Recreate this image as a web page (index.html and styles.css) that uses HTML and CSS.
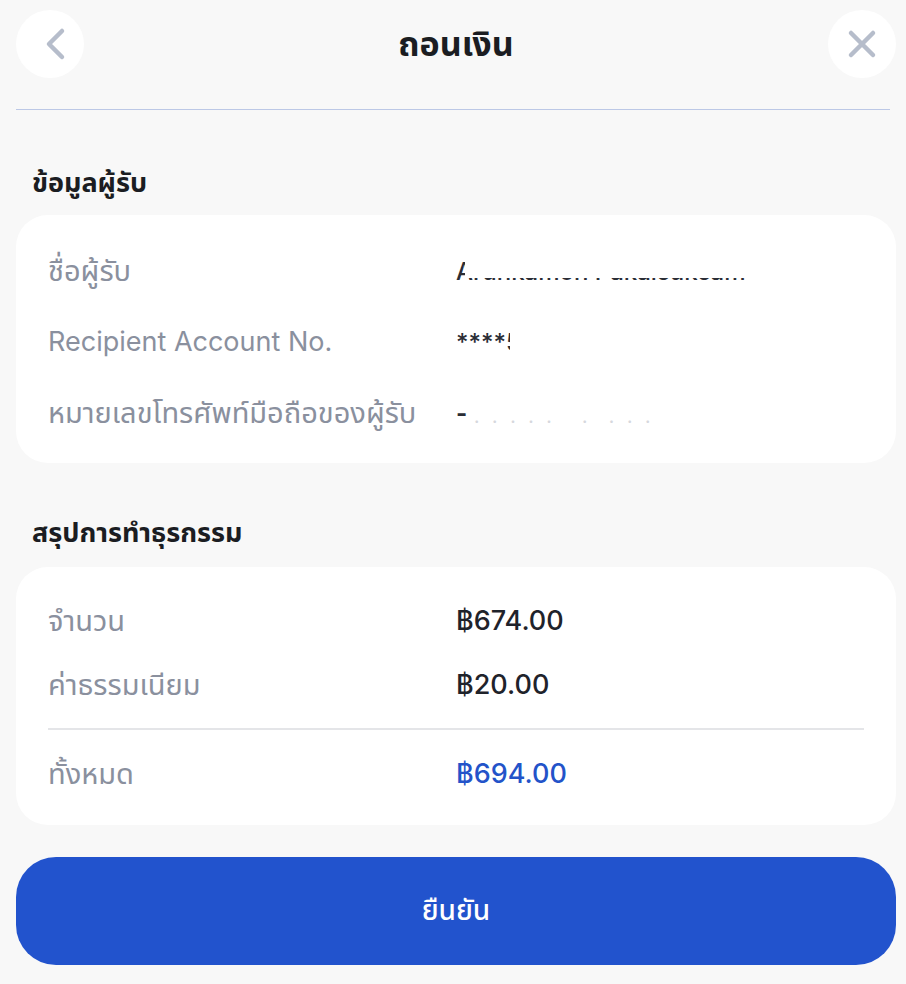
FILE: index.html
```html
<!DOCTYPE html>
<html lang="th">
<head>
<meta charset="utf-8">
<title>ถอนเงิน</title>
<link rel="stylesheet" href="styles.css">
</head>
<body>
<div class="page">
  <header class="topbar">
    <button class="circle-btn" aria-label="back">
      <svg width="68" height="68" viewBox="0 0 68 68"><path d="M46 21 L33 34 L46 47" fill="none" stroke="#b6bdcb" stroke-width="4.5" stroke-linecap="round" stroke-linejoin="round"/></svg>
    </button>
    <h1 class="title">ถอนเงิน</h1>
    <button class="circle-btn" aria-label="close">
      <svg width="68" height="68" viewBox="0 0 68 68"><path d="M23 23 L45 45 M45 23 L23 45" fill="none" stroke="#b6bdcb" stroke-width="4.5" stroke-linecap="round"/></svg>
    </button>
  </header>
  <div class="divider"></div>

  <h2 class="section-title first">ข้อมูลผู้รับ</h2>
  <section class="card recipient">
    <div class="row">
      <span class="label th">ชื่อผู้รับ</span>
      <span class="value redacted"><span class="val-text">Arunkamon Pakaisuksam</span><span class="mask mask-name"></span></span>
    </div>
    <div class="row">
      <span class="label">Recipient Account No.</span>
      <span class="value redacted"><span class="val-text">****5678</span><span class="mask mask-acc"></span></span>
    </div>
    <div class="row">
      <span class="label th">หมายเลขโทรศัพท์มือถือของผู้รับ</span>
      <span class="value redacted"><span class="val-text phone">-</span><span class="dots">. . . . . &nbsp; . &nbsp;. . .</span></span>
    </div>
  </section>

  <h2 class="section-title second">สรุปการทำธุรกรรม</h2>
  <section class="card summary">
    <div class="row">
      <span class="label th">จำนวน</span>
      <span class="value">฿674.00</span>
    </div>
    <div class="row">
      <span class="label th">ค่าธรรมเนียม</span>
      <span class="value">฿20.00</span>
    </div>
    <div class="sum-line"></div>
    <div class="row total">
      <span class="label th">ทั้งหมด</span>
      <span class="value">฿694.00</span>
    </div>
  </section>

  <button class="confirm">ยืนยัน</button>
</div>
</body>
</html>
```

FILE: styles.css
```css
html, body {
  margin: 0;
  padding: 0;
  background: #f8f8f8;
}
body {
  font-family: "Inter", "Noto Sans", "Noto Sans Thai", sans-serif;
  color: #1f232b;
}
.page {
  width: 906px;
  padding: 10px 10px 0 16px;
  box-sizing: border-box;
}
.topbar {
  display: flex;
  align-items: center;
  justify-content: space-between;
  height: 68px;
}
.circle-btn {
  width: 68px;
  height: 68px;
  border-radius: 50%;
  border: none;
  background: #ffffff;
  padding: 0;
  display: flex;
  align-items: center;
  justify-content: center;
}
.circle-btn svg { display: block; }
.title {
  margin: 0;
  font-size: 34px;
  font-weight: 700;
  color: #1b1d22;
  line-height: 44px;
}
.divider {
  height: 1px;
  background: #bcc8e6;
  margin: 31px 6px 0 0;
}
.section-title {
  margin: 0;
  padding-left: 16px;
  font-size: 27px;
  font-weight: 700;
  line-height: 32px;
  color: #1b1d22;
}
.section-title.first { margin-top: 57px; margin-bottom: 16px; }
.section-title.second { margin-top: 54px; margin-bottom: 18px; }
.card {
  background: #ffffff;
  border-radius: 32px;
  padding: 0 32px;
}
.row {
  display: grid;
  grid-template-columns: 408px 1fr;
  align-items: center;
}
.recipient { padding-top: 20px; padding-bottom: 15px; }
.recipient .row { height: 71px; }
.summary { padding-top: 22px; padding-bottom: 19px; }
.summary .row { height: 64px; }
.label {
  font-size: 27px;
  color: #8a909e;
  line-height: 36px;
  white-space: nowrap;
}
.label.th { font-size: 29px; }
.value {
  font-size: 27px;
  font-weight: 500;
  color: #1f232b;
  line-height: 36px;
  white-space: nowrap;
}
.total { margin-top: 12px; }
.total .value { color: #2353c9; }
.sum-line {
  height: 2px;
  background: #e4e5e8;
  margin-top: 11px;
}
.redacted {
  position: relative;
  display: block;
  height: 36px;
}
.val-text {
  font-size: 24px;
  color: #2a2d35;
}
.mask {
  position: absolute;
  background: #ffffff;
  top: 0;
}
.mask-name { left: 9px; width: 340px; height: 25px; }
.mask-acc { left: 54px; width: 200px; height: 36px; }
.phone { font-weight: 700; }
.dots {
  position: absolute;
  left: 18px;
  top: 4px;
  font-size: 18px;
  color: #d6d8dd;
  letter-spacing: 4px;
}
.confirm {
  display: flex;
  align-items: center;
  justify-content: center;
  width: 880px;
  height: 108px;
  margin-top: 32px;
  border: none;
  border-radius: 40px;
  background: #2253cd;
  color: #ffffff;
  font-family: inherit;
  font-size: 28px;
  font-weight: 500;
}
```
